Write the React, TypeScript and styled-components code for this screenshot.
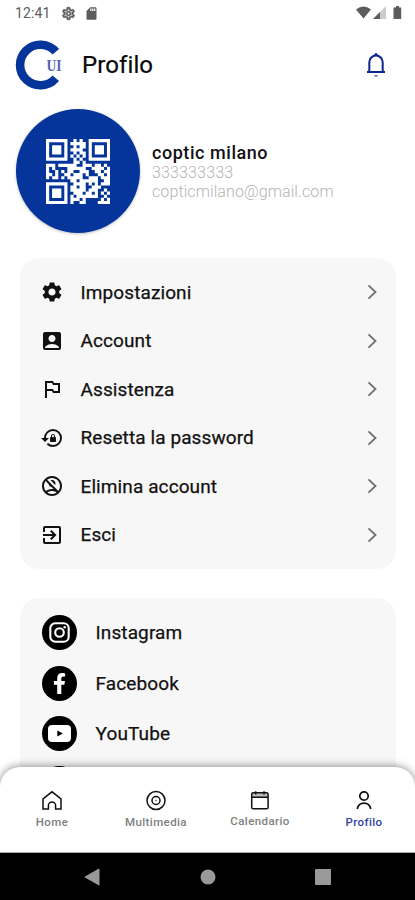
import React from "react";
import styled, { createGlobalStyle } from "styled-components";
import {
  MdSettings,
  MdOutlineSettings,
  MdSdCard,
  MdAccountBox,
  MdOutlinedFlag,
  MdLockReset,
  MdOutlineNoAccounts,
  MdExitToApp,
} from "react-icons/md";
import { FaFacebookF } from "react-icons/fa";

const GlobalStyle = createGlobalStyle`
  * { box-sizing: border-box; }
  body { margin: 0; background: #fff; font-family: Roboto, "Liberation Sans", sans-serif; }
  svg { display: block; flex: none; }
`;

const NAVY = "#05359a";

const Screen = styled.div`
  width: 415px;
  height: 900px;
  display: flex;
  flex-direction: column;
  overflow: hidden;
  background: #fff;
  color: #111;
`;

const Content = styled.main`
  flex: 1;
  min-height: 0;
  overflow: hidden;
`;

const StatusBar = styled.div`
  height: 26px;
  padding: 0 13px 0 15px;
  display: flex;
  align-items: center;
  color: #5c5c5c;
`;

const Clock = styled.span`
  font-size: 14px;
  letter-spacing: 0.1px;
  width: 46px;
`;

const StatusGroup = styled.div<{ $push?: boolean }>`
  display: flex;
  align-items: center;
  gap: 8px;
  margin-left: ${(p) => (p.$push ? "auto" : "0")};
`;

const StatusGear = styled(MdOutlineSettings)`
  path:not([fill="none"]) {
    stroke: currentColor;
    stroke-width: 1;
  }
`;

const Header = styled.header`
  height: 78px;
  padding: 0 28px 1px 14px;
  display: flex;
  align-items: center;
`;

const Title = styled.h1`
  margin: 0 auto 0 17px;
  font-size: 24px;
  line-height: 28px;
  font-weight: 400;
  letter-spacing: 0.1px;
  color: #080808;
  -webkit-text-stroke: 0.2px #080808;
`;

const ProfileRow = styled.section`
  height: 134px;
  padding: 5px 0 0 16px;
  display: flex;
  gap: 12px;
  align-items: flex-start;
`;

const Avatar = styled.div`
  width: 124px;
  height: 124px;
  border-radius: 50%;
  background: ${NAVY};
  box-shadow: 0 1px 3px rgba(0, 0, 0, 0.25);
  display: flex;
  align-items: center;
  justify-content: center;
`;

const Identity = styled.div`
  padding-top: 33px;
`;

const Name = styled.div`
  font-size: 18px;
  line-height: 21px;
  font-weight: 500;
  letter-spacing: 0.55px;
`;

const Detail = styled.div<{ $spacing: number }>`
  font-size: 16px;
  line-height: 19px;
  font-weight: 300;
  color: #b4b4b4;
  letter-spacing: ${(p) => p.$spacing}px;
`;

const Card = styled.section<{ $pad: number; $top: number; $left: number }>`
  margin: ${(p) => p.$top}px 19px 0 20px;
  padding: ${(p) => p.$pad}px 16px ${(p) => p.$pad}px ${(p) => p.$left}px;
  border-radius: 19px;
  background: #f7f7f7;
`;

const MenuRow = styled.div`
  height: 48.5px;
  display: flex;
  align-items: center;
`;

const SocialRow = styled(MenuRow)`
  height: 50.4px;
`;

const RowLabel = styled.span<{ $gap: number; $spacing: number }>`
  margin-left: ${(p) => p.$gap}px;
  margin-right: auto;
  font-size: 19px;
  font-weight: 400;
  letter-spacing: ${(p) => p.$spacing}px;
  -webkit-text-stroke: 0.25px #111;
`;

const Disc = styled.div`
  width: 35px;
  height: 35px;
  border-radius: 50%;
  background: #000;
  color: #fff;
  display: flex;
  align-items: center;
  justify-content: center;
`;

const TabBar = styled.nav`
  position: relative;
  height: 86px;
  margin-top: -24px;
  border-radius: 20px 20px 0 0;
  background: #fff;
  border-bottom: 1px solid #aaa;
  box-shadow: 0 -1px 9px rgba(0, 0, 0, 0.42);
  display: grid;
  grid-template-columns: repeat(4, 104px);
  flex: none;
`;

const Tab = styled.div<{ $active?: boolean; $lift?: boolean }>`
  padding-top: 23px;
  display: flex;
  flex-direction: column;
  align-items: center;
  gap: ${(p) => (p.$lift ? 3 : 4)}px;
  font-size: 11.5px;
  line-height: 14px;
  font-weight: 500;
  letter-spacing: 0.4px;
  color: ${(p) => (p.$active ? "#3540a4" : "#808080")};

  svg { color: #111; }
`;

const SystemBar = styled.div`
  height: 47px;
  flex: none;
  background: #000;
  display: flex;
  justify-content: center;
  align-items: center;
  gap: 99.5px;
`;

const QR_ROWS = [
  "XXXXXXX..X.X..XXXXXXX",
  "X.....X.XXXXX.X.....X",
  "X.XXX.X..X.XX.X.XXX.X",
  "X.XXX.X.XXXX..X.XXX.X",
  "X.XXX.X..X.XX.X.XXX.X",
  "X.....X.X.X.X.X.....X",
  "XXXXXXX..X.X..XXXXXXX",
  ".........XX.X........",
  "XXX.XXXXXX..XXX.XX.X.",
  "X.X....XXXXXX..XXXX.X",
  "X..X.X.XX..XXX..XX.XX",
  "XX.X..XX.XXX.X...XX.X",
  "X.XX.X.XXXXX..XXX.XXX",
  "........XX.XXXXXX..XX",
  "XXXXXXX..XXXX.X.X.XXX",
  "X.....X.XX.XX..XXX...",
  "X.XXX.X.XXXXX.XXX..X.",
  "X.XXX.X..XXX.XX.X.X.X",
  "X.XXX.X.X.XXXXXXX..X.",
  "X.....X.XXX.X.....X.X",
  "XXXXXXX.X..XX....XXXX",
];

function QrCode() {
  const d = QR_ROWS.flatMap((row, y) =>
    [...row].map((c, x) => (c === "X" ? `M${x} ${y}h1.04v1.04h-1.04z` : ""))
  ).join("");
  return (
    <svg width="64" height="65" viewBox="0 0 21 21" preserveAspectRatio="none" fill="#fff">
      <path d={d} />
    </svg>
  );
}

const LogoText = styled.text`
  font-family: "Liberation Serif", serif;
  font-size: 17px;
  font-weight: 700;
  fill: #5562b4;
`;

function Logo() {
  return (
    <svg width="51" height="50" viewBox="0 0 51 50">
      <path d="M41.8 11.8A20.3 20.3 0 1 0 41.8 38.2" fill="none" stroke={NAVY} strokeWidth="8.6" />
      <LogoText x="32.5" y="31" textLength="15" lengthAdjust="spacingAndGlyphs">UI</LogoText>
    </svg>
  );
}

function Bell() {
  return (
    <svg width="22" height="26" viewBox="0 0 22 26" fill="none" stroke="#0a2590" strokeWidth="2">
      <path d="M2 20h18M4.3 19.5V10.5a6.7 7 0 0 1 13.4 0v9" />
      <circle cx="11" cy="2.4" r="1.5" fill="#0a2590" stroke="none" />
      <path d="M8.8 23a2.3 2.3 0 0 0 4.4 0z" fill="#6672b9" stroke="none" />
    </svg>
  );
}

function Chevron() {
  return (
    <svg width="15" height="18" viewBox="0 0 15 18" fill="none" stroke="#707070" strokeWidth="1.8">
      <path d="M3.5 2.4L10.5 9L3.5 15.6" />
    </svg>
  );
}

function InstagramIcon() {
  return (
    <svg width="21" height="21" viewBox="0 0 21 21" fill="none" stroke="#fff" strokeWidth="2.1">
      <rect x="1.3" y="1.3" width="18.4" height="18.4" rx="5" />
      <circle cx="10.5" cy="10.5" r="4.3" />
      <circle cx="15.7" cy="5.3" r="1.2" fill="#fff" stroke="none" />
    </svg>
  );
}

function YoutubeIcon() {
  return (
    <svg width="23" height="17" viewBox="0 0 23 17">
      <rect width="23" height="17" rx="4" fill="#fff" />
      <path d="M9.3 5.4l5.6 3.1-5.6 3.1z" fill="#000" />
    </svg>
  );
}

const tabStroke = { fill: "none", stroke: "currentColor", strokeWidth: 1.5 };

function HomeIcon() {
  return (
    <svg width="22" height="21" viewBox="0 0 22 21" {...tabStroke}>
      <path d="M2 19V8.8L11 1.8l9 7V19h-5.4v-3.4a3.6 3.6 0 0 0-7.2 0V19z" />
    </svg>
  );
}

function MediaIcon() {
  return (
    <svg width="22" height="21" viewBox="0 0 22 21" {...tabStroke}>
      <circle cx="11" cy="10.5" r="9" />
      <circle cx="11" cy="10.5" r="4" />
      <circle cx="11" cy="10.5" r="0.9" fill="#777" stroke="none" />
    </svg>
  );
}

function CalendarIcon() {
  return (
    <svg width="22" height="21" viewBox="0 0 22 21" {...tabStroke}>
      <path d="M3 3h16v4H3z" fill="#bbb" stroke="none" />
      <rect x="2.7" y="2.7" width="16.4" height="16" rx="1.5" />
      <path d="M3 7.3h16M6.7 1.3v3.2M15 1.3v3.2" />
    </svg>
  );
}

function PersonIcon() {
  return (
    <svg width="22" height="21" viewBox="0 0 22 21" {...tabStroke} strokeWidth={1.7}>
      <circle cx="11" cy="6" r="4.2" />
      <path d="M4.2 19c.8-3.9 3.2-5.9 6.8-5.9s6 2 6.8 5.9" />
    </svg>
  );
}

const menu = [
  { label: "Impostazioni", Icon: MdSettings },
  { label: "Account", Icon: MdAccountBox },
  { label: "Assistenza", Icon: MdOutlinedFlag },
  { label: "Resetta la password", Icon: MdLockReset },
  { label: "Elimina account", Icon: MdOutlineNoAccounts },
  { label: "Esci", Icon: MdExitToApp },
];

const socials = [
  { label: "Instagram", icon: <InstagramIcon /> },
  { label: "Facebook", icon: <FaFacebookF size={21} /> },
  { label: "YouTube", icon: <YoutubeIcon /> },
  { label: "", icon: null },
];

export default function App() {
  return (
    <Screen>
      <GlobalStyle />
      <Content>
        <StatusBar>
          <Clock>12:41</Clock>
          <StatusGroup>
            <StatusGear size={15} />
            <MdSdCard size={15} />
          </StatusGroup>
          <StatusGroup $push>
            <svg width="46" height="14" viewBox="0 0 46 14">
              <path d="M0 3.5Q7.5-2.5 15 3.5L7.5 12.5z" fill="#5c5c5c" />
              <path d="M30 0v13H17z" fill="#ccc" />
              <path d="M24 6v7h-7z" fill="#5c5c5c" />
              <path d="M37.5 1.5H40V0h3v1.5h2.2V13h-7.7z" fill="#5c5c5c" />
            </svg>
          </StatusGroup>
        </StatusBar>
        <Header>
          <Logo />
          <Title>Profilo</Title>
          <Bell />
        </Header>
        <ProfileRow>
          <Avatar><QrCode /></Avatar>
          <Identity>
            <Name>coptic milano</Name>
            <Detail $spacing={0.15}>333333333</Detail>
            <Detail $spacing={0.1}>copticmilano@gmail.com</Detail>
          </Identity>
        </ProfileRow>
        <Card $pad={10} $top={20} $left={20}>
          {menu.map(({ label, Icon }) => (
            <MenuRow key={label}>
              <Icon size={24} />
              <RowLabel $gap={16.5} $spacing={0.1}>{label}</RowLabel>
              <Chevron />
            </MenuRow>
          ))}
        </Card>
        <Card $pad={9.5} $top={29} $left={22}>
          {socials.map(({ label, icon }, i) => (
            <SocialRow key={i}>
              <Disc>{icon}</Disc>
              <RowLabel $gap={18.5} $spacing={0.12}>{label}</RowLabel>
            </SocialRow>
          ))}
        </Card>
      </Content>
      <TabBar>
        <Tab><HomeIcon />Home</Tab>
        <Tab><MediaIcon />Multimedia</Tab>
        <Tab $lift><CalendarIcon />Calendario</Tab>
        <Tab $active><PersonIcon />Profilo</Tab>
      </TabBar>
      <SystemBar>
        <svg width="16" height="18" viewBox="0 0 16 18"><path d="M15 1v16L1 9z" fill="#999" stroke="#999" /></svg>
        <svg width="16" height="16" viewBox="0 0 16 16"><circle cx="8" cy="8" r="7.5" fill="#999" /></svg>
        <svg width="16" height="16" viewBox="0 0 16 16"><rect width="16" height="16" rx="1" fill="#999" /></svg>
      </SystemBar>
    </Screen>
  );
}
